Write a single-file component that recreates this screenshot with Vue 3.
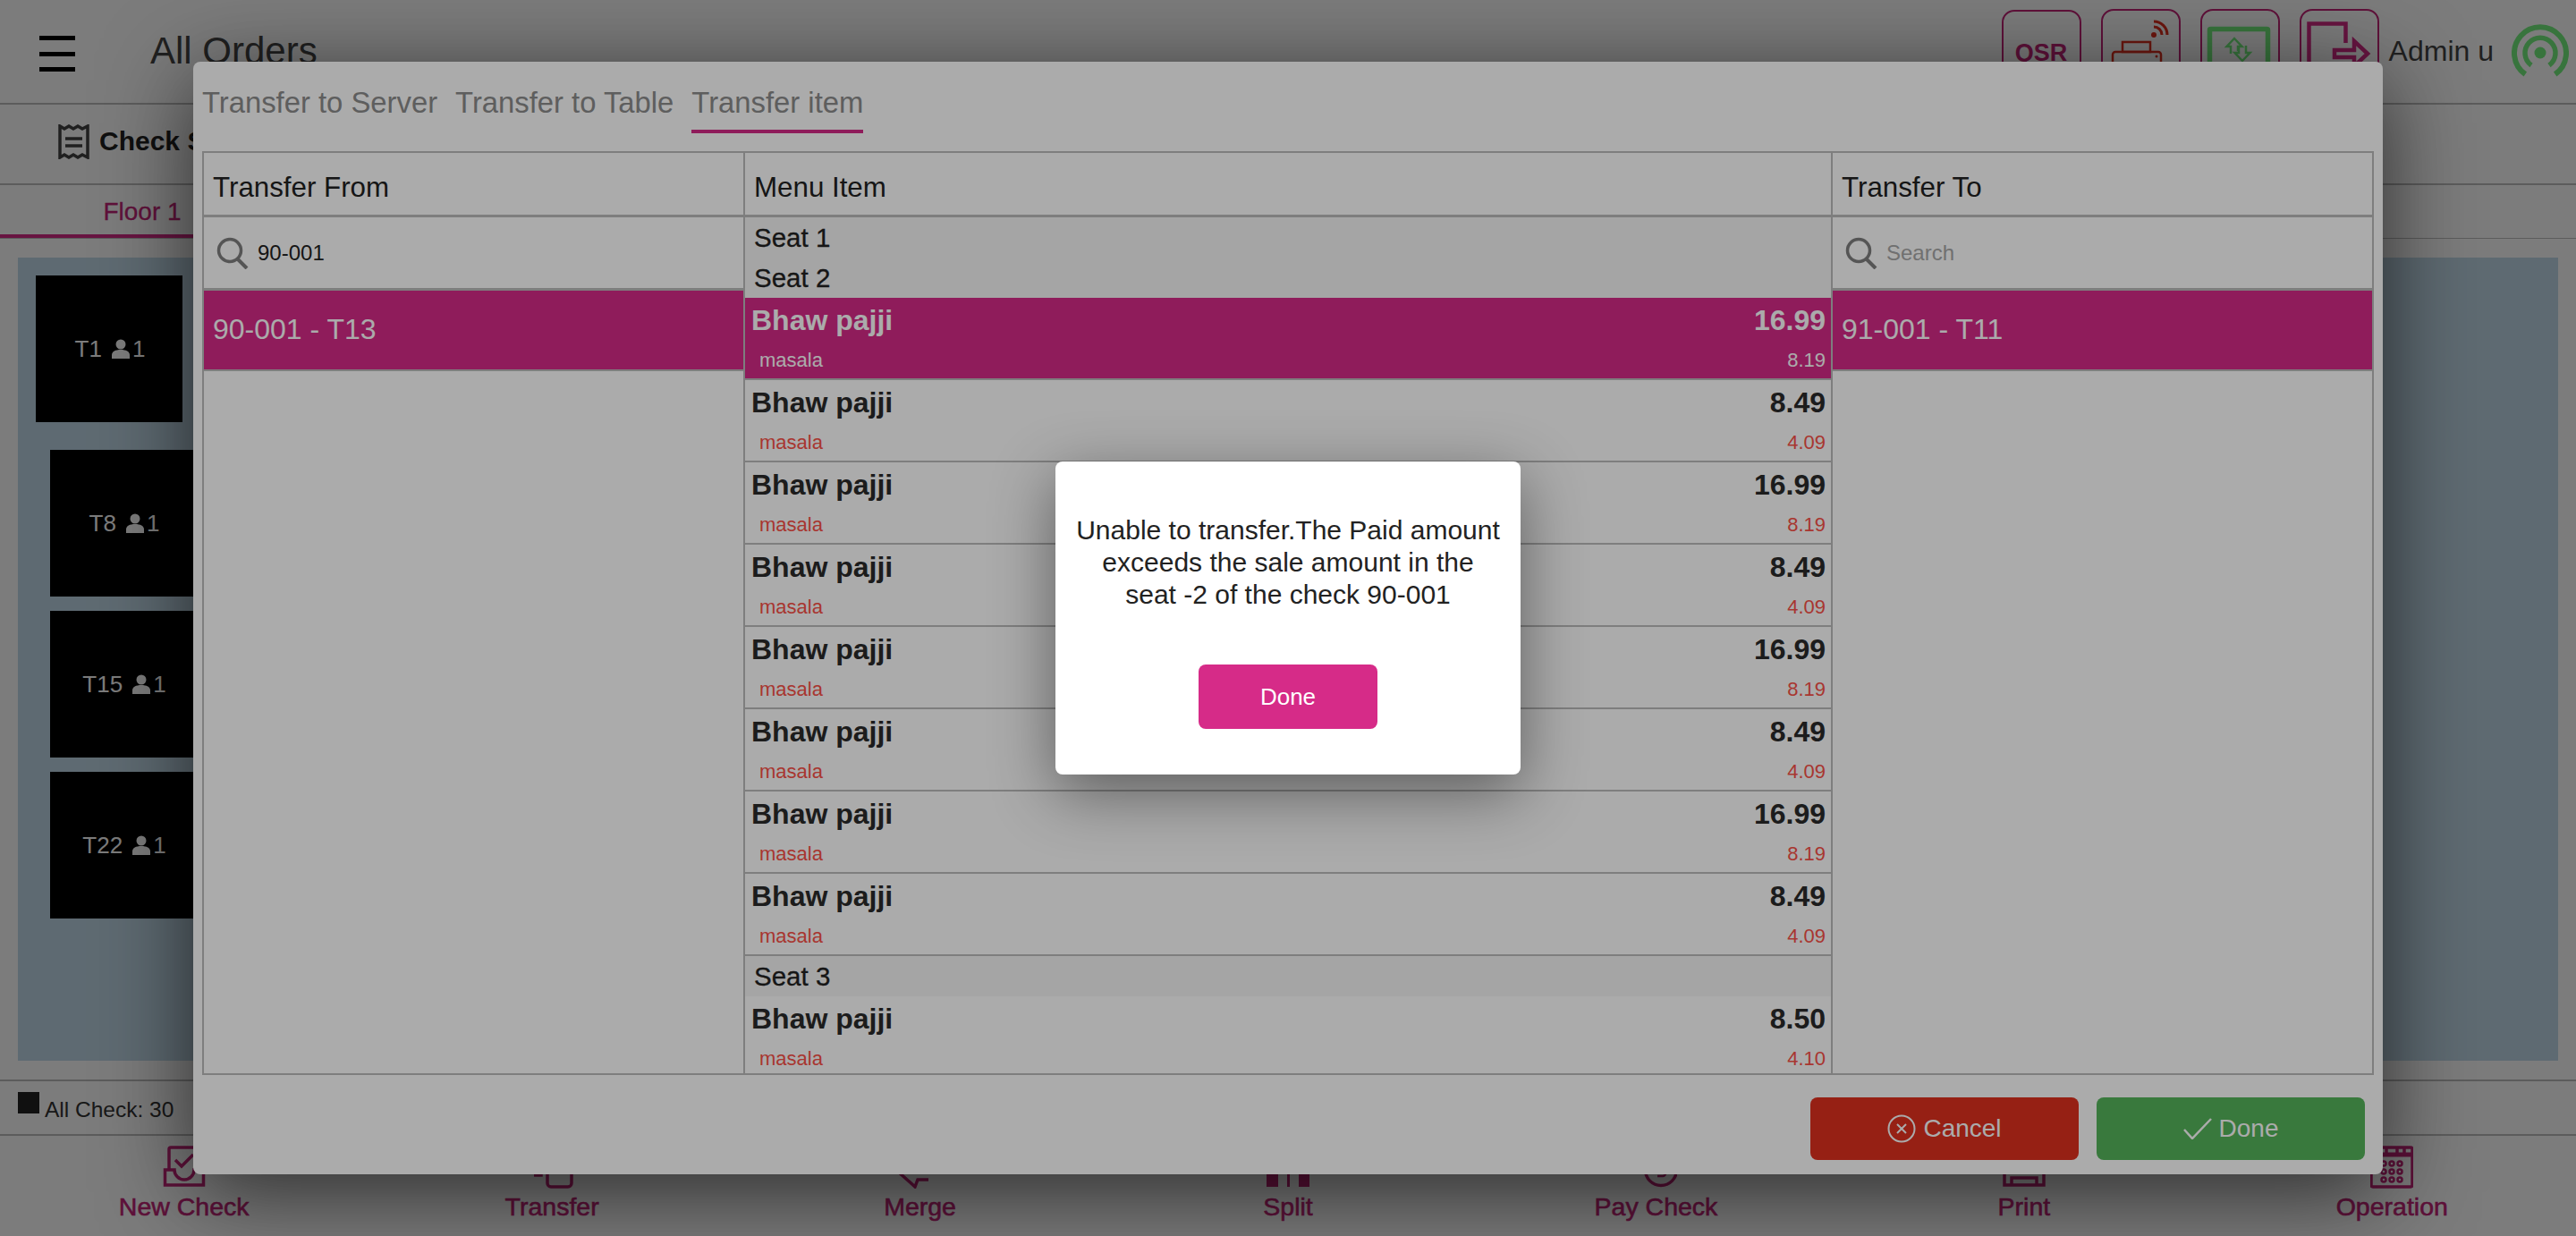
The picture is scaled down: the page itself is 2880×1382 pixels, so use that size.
<script setup>
const tables = [
  { name: 'T1', guests: 1, cls: 'first' },
  { name: 'T8', guests: 1, cls: 't8' },
  { name: 'T15', guests: 1, cls: 't15' },
  { name: 'T22', guests: 1, cls: 't22' }
]

const seat2Items = [
  { price: '16.99', sub: '8.19', selected: true },
  { price: '8.49', sub: '4.09' },
  { price: '16.99', sub: '8.19' },
  { price: '8.49', sub: '4.09' },
  { price: '16.99', sub: '8.19' },
  { price: '8.49', sub: '4.09' },
  { price: '16.99', sub: '8.19' },
  { price: '8.49', sub: '4.09' }
]

const navItems = [
  { label: 'New Check', icon: 'new' },
  { label: 'Transfer', icon: 'transfer' },
  { label: 'Merge', icon: 'merge' },
  { label: 'Split', icon: 'split' },
  { label: 'Pay Check', icon: 'pay' },
  { label: 'Print', icon: 'print' },
  { label: 'Operation', icon: 'operation' }
]
</script>

<template>
  <div class="page">
    <header class="topbar">
      <div class="burger"><span></span><span></span><span></span></div>
      <h1 class="title">All Orders</h1>
      <div class="top-right">
        <div class="top-btn qsr">QSR</div>
        <div class="top-btn">
          <svg viewBox="0 0 89 90" width="89" height="90" fill="none" stroke="#e0301f" stroke-width="2.5">
            <rect x="25" y="37" width="31" height="11" />
            <rect x="14" y="48" width="54" height="36" rx="3" />
            <circle cx="63" cy="53" r="1.5" fill="#e0301f" stroke="none" />
            <circle cx="60" cy="29" r="3" fill="#e0301f" stroke="none" />
            <path d="M60 20a9 9 0 0 1 9 9M60 14a15 15 0 0 1 15 15" stroke-width="3" />
          </svg>
        </div>
        <div class="top-btn">
          <svg viewBox="0 0 89 90" width="89" height="90" fill="none">
            <rect x="11.5" y="22.5" width="65" height="66" rx="1" stroke="#74f07e" stroke-width="5.5" />
            <path d="M35 50V42h-4.5L39 33l8.5 9H43v5M44 41v8h-4.5l8.5 9 8.5-9H52v-8" stroke="#74f07e" stroke-width="2.5" />
          </svg>
        </div>
        <div class="top-btn">
          <svg viewBox="0 0 89 90" width="89" height="90" fill="none" stroke="#d62b88" stroke-width="4.5">
            <path d="M11.5 90V16.5h41V38" />
            <path d="M40 46h22V36l15 14-15 14V54H40z" />
          </svg>
        </div>
      </div>
      <span class="admin">Admin u</span>
      <svg class="signal" viewBox="0 0 64 60" width="64" height="60" fill="none" stroke="#74f07e">
        <circle cx="32" cy="32" r="6.5" fill="#74f07e" stroke="none" />
        <path d="M22 46a17 17 0 1 1 20 0" stroke-width="5.5" />
        <path d="M15.3 56a29 29 0 1 1 33.4 0" stroke-width="6" />
      </svg>
    </header>

    <div class="subbar">
      <svg viewBox="0 0 35 39" width="35" height="39" fill="none" stroke="#444" stroke-width="3.5">
        <path d="M2 2l5 3 5-3 5 3 5-3 5 3 6-3v35l-6-3-5 3-5-3-5 3-5-3-5 3z" />
        <path d="M8 16h19M8 24h19" />
      </svg>
      <span class="check-label">Check Summary</span>
    </div>

    <div class="floors">
      <div class="floor-tab">Floor 1</div>
    </div>

    <main class="floor-area">
      <div class="canvas">
        <div v-for="t in tables" :key="t.name" class="table-card" :class="t.cls">
          <span>{{ t.name }}</span>
          <svg viewBox="0 0 22 22" width="22" height="22" fill="#fff">
            <circle cx="11" cy="6" r="5.5" />
            <path d="M1 22v-4c0-4 4-6 10-6s10 2 10 6v4z" />
          </svg>
          <span class="guests">{{ t.guests }}</span>
        </div>
      </div>
    </main>

    <div class="status">
      <i class="status-dot"></i>
      <span>All Check: 30</span>
    </div>

    <nav class="bottom-nav">
      <div v-for="item in navItems" :key="item.label" class="nav-item">
        <svg viewBox="0 0 48 48" width="48" height="48" fill="none" stroke="#c42579" stroke-width="3.5">
          <template v-if="item.icon === 'new'">
            <path d="M7 27V4a2 2 0 0 1 2-2h31a2 2 0 0 1 2 2v23" />
            <path d="M14 16l7 7 13-13" />
            <path d="M13 27H2.5v17h43V27H35a11 11 0 0 1-22 0z" />
          </template>
          <template v-else-if="item.icon === 'transfer'">
            <path d="M19 8h27M19 18h27" />
            <path d="M19 20v22a4 4 0 0 0 4 4h19a4 4 0 0 0 4-4V20" />
            <path d="M4 33h8v-4" />
          </template>
          <template v-else-if="item.icon === 'merge'">
            <path d="M-2 28l20 18 3-8h12" />
            <path d="M6 4l22 14M33 26H22" />
          </template>
          <template v-else-if="item.icon === 'split'">
            <rect x="0" y="4" width="13" height="42" fill="#c42579" stroke="none" />
            <rect x="36" y="4" width="12" height="42" fill="#c42579" stroke="none" />
            <path d="M24.5 2v44" stroke-width="3" />
          </template>
          <template v-else-if="item.icon === 'pay'">
            <circle cx="30" cy="27" r="17.5" />
            <path d="M7 22l5 8" />
            <path d="M35 22h-7a3 3 0 0 0 0 6h4a3 3 0 0 1 0 6h-6" stroke-width="2.5" />
          </template>
          <template v-else-if="item.icon === 'print'">
            <path d="M2 28h44v16H2zM10 43v-7h28v7" />
            <path d="M10 28V4h28v24" />
          </template>
          <template v-else>
            <rect x="1" y="2" width="46" height="44" rx="2" />
            <path d="M2 10h44" stroke-width="5" />
            <path d="M10 2v6M18 2v6M30 2v6M38 2v6" />
            <g stroke-width="2.5">
              <circle cx="15" cy="20" r="2.5" /><circle cx="24" cy="20" r="2.5" /><circle cx="33" cy="20" r="2.5" />
              <circle cx="15" cy="29" r="2.5" /><circle cx="24" cy="29" r="2.5" /><circle cx="33" cy="29" r="2.5" />
              <circle cx="15" cy="38" r="2.5" /><circle cx="24" cy="38" r="2.5" /><circle cx="33" cy="38" r="2.5" />
            </g>
          </template>
        </svg>
        <span>{{ item.label }}</span>
      </div>
    </nav>

    <!-- transfer popup -->
    <div class="overlay first-overlay">
      <div class="modal">
        <div class="tabs">
          <span class="tab">Transfer to Server</span>
          <span class="tab">Transfer to Table</span>
          <span class="tab active">Transfer item</span>
        </div>

        <div class="transfer-table">
          <section class="col from">
            <div class="col-head">Transfer From</div>
            <div class="search">
              <svg viewBox="0 0 36 36" width="36" height="36" fill="none" stroke="#7f7f7f" stroke-width="3.5">
                <circle cx="15" cy="15" r="12.5" />
                <path d="M23 24l11 11" stroke-width="4" />
              </svg>
              <span>90-001</span>
            </div>
            <div class="check-row">90-001 - T13</div>
          </section>

          <section class="col menu">
            <div class="col-head">Menu Item</div>
            <div class="seat">Seat 1</div>
            <div class="seat">Seat 2</div>
            <div
              v-for="(row, i) in seat2Items"
              :key="i"
              class="item"
              :class="{ selected: row.selected }"
            >
              <div class="item-main"><span>Bhaw pajji</span><span>{{ row.price }}</span></div>
              <div class="item-sub"><span>masala</span><span>{{ row.sub }}</span></div>
            </div>
            <div class="seat seat-last">Seat 3</div>
            <div class="item">
              <div class="item-main"><span>Bhaw pajji</span><span>8.50</span></div>
              <div class="item-sub"><span>masala</span><span>4.10</span></div>
            </div>
          </section>

          <section class="col to">
            <div class="col-head">Transfer To</div>
            <div class="search">
              <svg viewBox="0 0 36 36" width="36" height="36" fill="none" stroke="#7f7f7f" stroke-width="3.5">
                <circle cx="15" cy="15" r="12.5" />
                <path d="M23 24l11 11" stroke-width="4" />
              </svg>
              <span class="placeholder">Search</span>
            </div>
            <div class="check-row">91-001 - T11</div>
          </section>
        </div>

        <div class="modal-foot">
          <button class="foot-btn cancel">
            <svg viewBox="0 0 32 32" width="32" height="32" fill="none" stroke="#fff" stroke-width="2">
              <circle cx="16" cy="16" r="14.5" />
              <path d="M11 11l10 10M21 11L11 21" />
            </svg>
            Cancel
          </button>
          <button class="foot-btn done">
            <svg viewBox="0 0 32 24" width="32" height="24" fill="none" stroke="#fff" stroke-width="2.5">
              <path d="M1 13l9 10L31 1" />
            </svg>
            Done
          </button>
        </div>
      </div>
    </div>

    <!-- alert on top of the popup -->
    <div class="overlay second-overlay">
      <div class="alert">
        <p>Unable to transfer.The Paid amount exceeds the sale amount in the seat -2 of the check 90-001</p>
        <button class="alert-btn">Done</button>
      </div>
    </div>
  </div>
</template>

<style>
html,
body {
  margin: 0;
  overflow: hidden;
}
</style>

<style scoped>
.page {
  position: relative;
  display: flex;
  flex-direction: column;
  width: 2880px;
  height: 1382px;
  overflow: hidden;
  background: #fff;
  color: #444;
  font-family: "Liberation Sans", Arial, sans-serif;
}

.topbar {
  display: flex;
  align-items: flex-start;
  box-sizing: border-box;
  height: 117px;
  padding: 10px 8px 0 44px;
  border-bottom: 2px solid #bdbdbd;
}

.burger {
  display: flex;
  flex-direction: column;
  justify-content: space-between;
  width: 40px;
  height: 40px;
  margin-top: 30px;
}

.burger span {
  height: 5px;
  background: #000;
}

.title {
  margin: 17px 0 0 84px;
  font-size: 42px;
  font-weight: 400;
  line-height: 60px;
}

.top-right {
  display: flex;
  gap: 22px;
  margin-left: auto;
}

.top-btn {
  box-sizing: border-box;
  width: 89px;
  height: 92px;
  border: 2.5px solid #c42579;
  border-radius: 14px;
  overflow: hidden;
}

.top-btn svg {
  display: block;
  margin: -2.5px;
}

.qsr {
  margin-top: 1px;
  padding-top: 31px;
  text-align: center;
  color: #c42579;
  font-size: 27px;
  font-weight: 700;
  line-height: 30px;
}

.admin {
  margin: 27px 20px 0 11px;
  font-size: 32px;
  line-height: 40px;
}

.signal {
  margin-top: 17px;
}

.subbar {
  display: flex;
  align-items: center;
  box-sizing: border-box;
  height: 90px;
  padding: 0 0 6px 65px;
  border-bottom: 2px solid #bdbdbd;
}

.check-label {
  margin-left: 11px;
  color: #222;
  font-size: 30px;
  font-weight: 700;
}

.floors {
  box-sizing: border-box;
  height: 60px;
  border-bottom: 1px solid #bdbdbd;
}

.floor-tab {
  box-sizing: border-box;
  width: 318px;
  height: 59px;
  border-bottom: 4px solid #d62b88;
  text-align: center;
  color: #c42579;
  font-size: 28px;
  line-height: 60px;
  -webkit-text-stroke: 0.3px #c42579;
}

.floor-area {
  flex: 1;
  display: flex;
  padding: 21px 20px;
  border-bottom: 2px solid #bdbdbd;
}

.canvas {
  position: relative;
  flex: 1;
  background: #c3dceb;
}

.table-card {
  position: absolute;
  display: flex;
  align-items: center;
  justify-content: center;
  gap: 10px;
  width: 164px;
  height: 164px;
  padding-left: 2px;
  box-sizing: border-box;
  background: #000;
  color: #fff;
  font-size: 26px;
}

.guests {
  margin-left: -8px;
}

.first { left: 20px; top: 20px; }
.t8 { left: 36px; top: 215px; }
.t15 { left: 36px; top: 395px; }
.t22 { left: 36px; top: 575px; }

.status {
  display: flex;
  align-items: center;
  box-sizing: border-box;
  height: 61px;
  padding-left: 20px;
  gap: 6px;
  border-bottom: 2px solid #bdbdbd;
  color: #333;
  font-size: 24.5px;
}

.status-dot {
  width: 24px;
  height: 24px;
  margin-top: -12px;
  background: #222;
}

.status span {
  margin-top: 4px;
}

.bottom-nav {
  display: grid;
  grid-template-columns: repeat(7, 1fr);
  height: 112px;
}

.nav-item {
  display: flex;
  flex-direction: column;
  align-items: center;
  padding-top: 11px;
  color: #c42579;
  font-size: 28.5px;
  line-height: 40px;
  -webkit-text-stroke: 0.6px #c42579;
}

.nav-item svg {
  flex: none;
}

.overlay {
  position: absolute;
  inset: 0;
  display: flex;
  align-items: center;
  justify-content: center;
}

.first-overlay {
  background: rgba(0, 0, 0, 0.275);
}

.second-overlay {
  background: rgba(0, 0, 0, 0.33);
}

.modal {
  display: flex;
  flex-direction: column;
  box-sizing: border-box;
  width: 2448px;
  height: 1244px;
  padding: 0 10px;
  border-radius: 8px;
  background: #fff;
  box-shadow: 0 20px 100px rgba(0, 0, 0, 0.65);
}

.tabs {
  display: flex;
  align-items: flex-start;
  gap: 20px;
  height: 100px;
  box-sizing: border-box;
  padding-top: 26px;
}

.tab {
  height: 50px;
  color: #8c8c8c;
  font-size: 32.8px;
  line-height: 40px;
}

.tab.active {
  border-bottom: 4px solid #d62b88;
}

.transfer-table {
  display: grid;
  grid-template-columns: 603px 1218px 1fr;
  box-sizing: border-box;
  height: 1033px;
  border: 2px solid #bdbdbd;
  overflow: hidden;
}

.col {
  display: flex;
  flex-direction: column;
  min-width: 0;
}

.col.menu {
  border-left: 2px solid #bdbdbd;
  border-right: 2px solid #bdbdbd;
}

.col-head {
  flex: none;
  box-sizing: border-box;
  height: 72px;
  padding-left: 10px;
  border-bottom: 3px solid #bdbdbd;
  color: #222;
  font-size: 31.3px;
  line-height: 77px;
}

.search {
  display: flex;
  align-items: center;
  gap: 10px;
  box-sizing: border-box;
  height: 82px;
  padding: 1px 0 0 14px;
  border-bottom: 3px solid #bdbdbd;
  color: #222;
  font-size: 24px;
}

.placeholder {
  color: #a8a8a8;
}

.check-row {
  box-sizing: border-box;
  height: 90px;
  padding-left: 10px;
  border-bottom: 2px solid #bdbdbd;
  background: #d62b88;
  color: #fff;
  font-size: 32px;
  line-height: 86px;
}

.seat {
  flex: none;
  height: 45px;
  padding-left: 10px;
  background: #f6f6f6;
  color: #222;
  font-size: 29.5px;
  line-height: 45px;
  -webkit-text-stroke: 0.3px #222;
}

.item {
  flex: none;
  box-sizing: border-box;
  height: 92px;
  padding: 0 6px 0 7px;
  border-bottom: 2px solid #bdbdbd;
  color: #2a2a2a;
}

.item-main,
.item-sub {
  display: flex;
  justify-content: space-between;
}

.item-main {
  height: 50px;
  font-size: 32px;
  font-weight: 700;
  line-height: 50px;
}

.item-sub {
  height: 40px;
  padding-left: 9px;
  color: #fb5148;
  font-size: 22px;
  line-height: 40px;
}

.item.selected {
  background: #d62b88;
  color: #fff;
}

.item.selected .item-sub {
  color: #fff;
}

.modal-foot {
  display: flex;
  justify-content: flex-end;
  gap: 20px;
  padding: 25px 10px 0 0;
}

.foot-btn {
  display: flex;
  align-items: center;
  justify-content: center;
  gap: 8px;
  width: 300px;
  height: 70px;
  border: 0;
  border-radius: 8px;
  color: #fff;
  font-family: inherit;
  font-size: 28px;
}

.cancel {
  background: #e0301f;
}

.done {
  background: #55b55b;
}

.alert {
  box-sizing: border-box;
  width: 520px;
  height: 350px;
  padding: 59px 22px 0;
  border-radius: 8px;
  background: #fff;
  text-align: center;
  box-shadow: 0 20px 70px rgba(0, 0, 0, 0.45);
}

.alert p {
  margin: 0 0 60px;
  color: #222;
  font-size: 30px;
  line-height: 36px;
}

.alert-btn {
  width: 200px;
  height: 72px;
  border: 0;
  border-radius: 8px;
  background: #d62b88;
  color: #fff;
  font-family: inherit;
  font-size: 26px;
}
</style>
